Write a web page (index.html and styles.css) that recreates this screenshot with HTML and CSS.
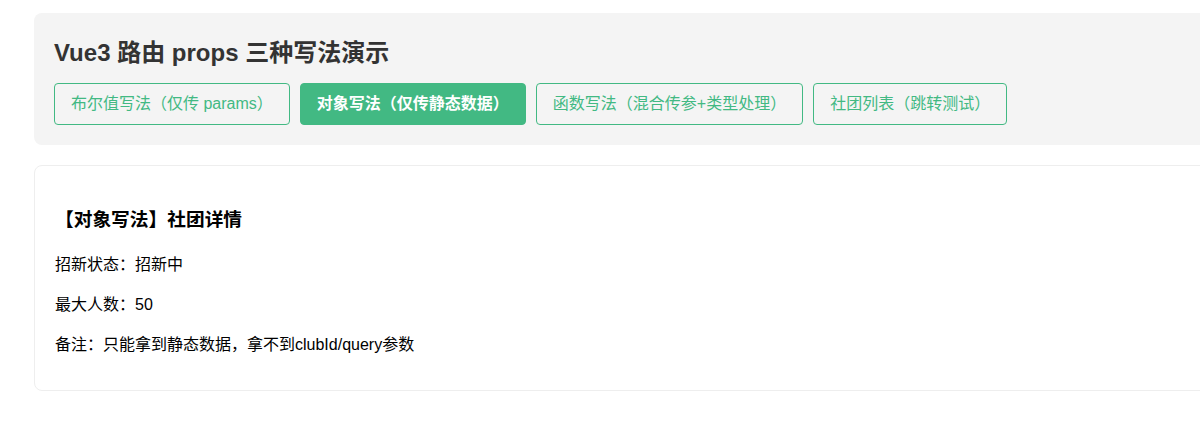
FILE: index.html
```html
<!DOCTYPE html>
<html lang="zh-CN">
<head>
<meta charset="utf-8">
<title>Vue3 路由 props 三种写法演示</title>
<link rel="stylesheet" href="styles.css">
</head>
<body>
<div class="app">
  <header class="nav">
    <h2 class="title">Vue3 路由 props 三种写法演示</h2>
    <div class="links">
      <a class="btn">布尔值写法（仅传 params）</a>
      <a class="btn active">对象写法（仅传静态数据）</a>
      <a class="btn">函数写法（混合传参+类型处理）</a>
      <a class="btn">社团列表（跳转测试）</a>
    </div>
  </header>
  <main class="card">
    <h3 class="card-title">【对象写法】社团详情</h3>
    <p class="line">招新状态：招新中</p>
    <p class="line">最大人数：50</p>
    <p class="line">备注：只能拿到静态数据，拿不到clubId/query参数</p>
  </main>
</div>
</body>
</html>
```

FILE: styles.css
```css
html, body {
  margin: 0;
  padding: 0;
  overflow: hidden;
  background: #fff;
}

body {
  font-family: "Liberation Sans", Arial, "Noto Sans CJK SC", sans-serif;
  color: #000;
}

.app {
  padding: 13px 0 0 34px;
  width: 1240px;
  display: flex;
  flex-direction: column;
  gap: 20px;
}

.nav {
  background: #f4f4f4;
  border-radius: 8px;
  padding: 20px;
}

.title {
  margin: 6px 0 16px;
  font-size: 24px;
  line-height: 28px;
  font-weight: bold;
  color: #333;
}

.links {
  display: flex;
  gap: 10px;
}

.btn {
  display: block;
  height: 40px;
  line-height: 40px;
  padding: 0 16px;
  border: 1px solid #42b983;
  border-radius: 4px;
  color: #42b983;
  font-size: 16px;
  white-space: nowrap;
  text-decoration: none;
}

.btn.active {
  background: #42b983;
  color: #fff;
  font-weight: bold;
}

.card {
  border: 1px solid #eee;
  border-radius: 8px;
  padding: 20px 20px 17px;
}

.card-title {
  margin: 20px 0 19px;
  font-size: 18.72px;
  line-height: 28px;
  font-weight: bold;
}

.line {
  margin: 16px 0;
  font-size: 16px;
  line-height: 24px;
}
```
